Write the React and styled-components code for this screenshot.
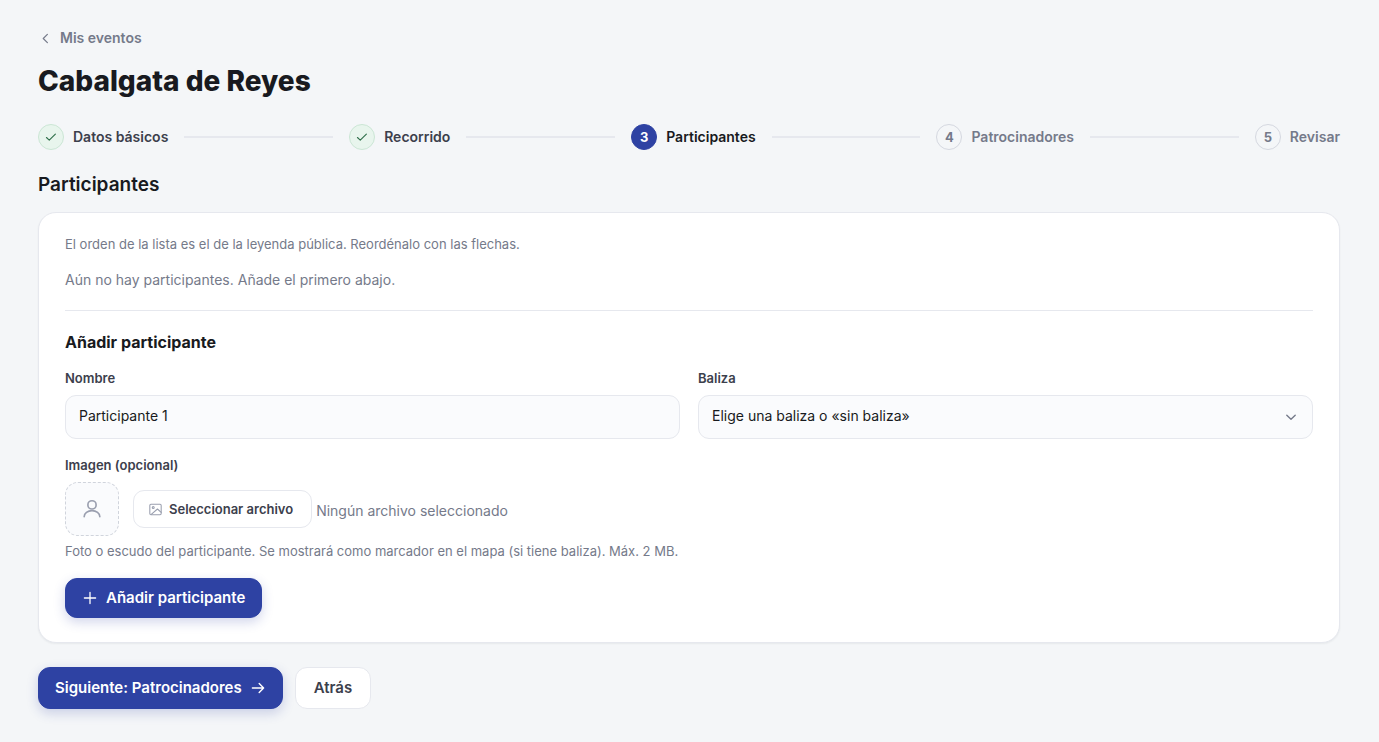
import { useState } from "react";
import styled, { createGlobalStyle } from "styled-components";

const GlobalStyle = createGlobalStyle`
  *, *::before, *::after {
    box-sizing: border-box;
  }
  body {
    margin: 0;
    background: #f4f6f8;
    color: #181a20;
    font-family: Inter, "Open Sans", sans-serif;
    font-size: 14px;
    line-height: 20px;
  }
  h1, h2, h3, p, ol {
    margin: 0;
    padding: 0;
  }
  button, input, select {
    font: inherit;
    color: inherit;
  }
`;

const Page = styled.main`
  display: flex;
  flex-direction: column;
  align-items: stretch;
  padding: 28px 39px 32px 38px;
`;

const BackLink = styled.a`
  display: flex;
  align-items: center;
  align-self: flex-start;
  gap: 7px;
  color: #757a8a;
  font-weight: 600;
  text-decoration: none;
`;

const PageTitle = styled.h1`
  margin-top: 15px;
  font-size: 28px;
  line-height: 36px;
  font-weight: 800;
`;

const Steps = styled.ol`
  display: flex;
  align-items: center;
  gap: 16px;
  margin-top: 25px;
  list-style: none;
`;

const stepColors = {
  done: { text: "#3c404c", bg: "#e8f5ed", border: "#cbe6d5", mark: "#2f6f4a" },
  current: { text: "#181a20", bg: "#2e42a3", border: "#2e42a3", mark: "#fff" },
  pending: { text: "#757a8a", bg: "transparent", border: "#d5d8e0", mark: "#757a8a" },
};

const Step = styled.li`
  display: flex;
  align-items: center;
  gap: 9px;
  flex: ${({ $last }) => ($last ? "none" : "1 0 auto")};
  color: ${({ $state }) => stepColors[$state].text};
  font-weight: 600;

  &::after {
    content: "";
    display: ${({ $last }) => ($last ? "none" : "block")};
    flex: 1;
    height: 2px;
    margin-left: 7px;
    background: #e6e8ee;
  }
`;

const StepMark = styled.span`
  display: grid;
  place-items: center;
  width: 26px;
  height: 26px;
  border: 1px solid ${({ $state }) => stepColors[$state].border};
  border-radius: 50%;
  background: ${({ $state }) => stepColors[$state].bg};
  color: ${({ $state }) => stepColors[$state].mark};
  font-size: 13px;
  font-weight: 700;
`;

const SectionTitle = styled.h2`
  margin-top: 23px;
  font-size: 19px;
  line-height: 24px;
  font-weight: 600;
`;

const Card = styled.section`
  margin-top: 15px;
  padding: 21px 26px 24px;
  border: 1px solid #e6e8ee;
  border-radius: 18px;
  background: #fff;
  box-shadow: 0 1px 2px rgba(24, 26, 32, 0.06);
`;

const Hint = styled.p`
  color: #757a8a;
  font-size: 13px;
`;

const Empty = styled.p`
  margin-top: 15px;
  padding-bottom: 19px;
  border-bottom: 1px solid #e6e8ee;
  color: #757a8a;
  line-height: 22px;
`;

const FormTitle = styled.h3`
  margin-top: 20px;
  font-size: 16px;
  line-height: 22px;
  font-weight: 700;
`;

const Fields = styled.div`
  display: grid;
  grid-template-columns: 1fr 1fr;
  gap: 16px 18px;
  margin-top: 15px;
`;

const Field = styled.div`
  display: flex;
  flex-direction: column;
  gap: 7px;
  grid-column: ${({ $wide }) => ($wide ? "1 / -1" : "auto")};
`;

const Label = styled.label`
  color: #3c404c;
  font-size: 13px;
  font-weight: 600;
`;

const Input = styled.input`
  width: 100%;
  height: 44px;
  padding: 0 13px 3px;
  border: 1px solid #e6e8ee;
  border-radius: 11px;
  background: #fafbfd;
  outline: none;
`;

const SelectWrap = styled.div`
  position: relative;

  svg {
    position: absolute;
    right: 14px;
    top: 14px;
    color: #757a8a;
    pointer-events: none;
  }
`;

const Select = styled(Input).attrs({ as: "select" })`
  appearance: none;
`;

const FileRow = styled.div`
  display: flex;
  align-items: center;
`;

const Avatar = styled.div`
  display: grid;
  place-items: center;
  width: 54px;
  height: 54px;
  margin-right: 14px;
  border: 1px dashed #d0d4dc;
  border-radius: 13px;
  background: #fafbfd;
  color: #9a9faf;
`;

const FileInput = styled.input`
  position: absolute;
  width: 1px;
  height: 1px;
  opacity: 0;
`;

const FileButton = styled.label`
  display: flex;
  align-items: center;
  gap: 7px;
  height: 38px;
  padding: 0 18px 0 15px;
  border: 1px solid #e6e8ee;
  border-radius: 11px;
  background: #fff;
  color: #3c404c;
  font-size: 13px;
  font-weight: 600;
  cursor: pointer;

  svg {
    color: #9a9faf;
  }
`;

const FileName = styled.span`
  margin-left: 4px;
  padding-top: 4px;
  color: #757a8a;
`;

const FileHint = styled(Hint)`
  margin-top: 5px;
`;

const Button = styled.button`
  display: inline-flex;
  align-items: center;
  gap: 8px;
  height: ${({ $small }) => ($small ? "40px" : "42px")};
  padding: 0 ${({ $primary }) => ($primary ? "16px" : "18px")};
  border: 1px solid ${({ $primary }) => ($primary ? "#2e42a3" : "#e6e8ee")};
  border-radius: 12px;
  background: ${({ $primary }) => ($primary ? "#2e42a3" : "#fff")};
  color: ${({ $primary }) => ($primary ? "#fff" : "#3c404c")};
  box-shadow: ${({ $primary }) =>
    $primary ? "0 4px 12px rgba(46, 66, 163, 0.22)" : "none"};
  font-size: 15px;
  font-weight: 600;
  cursor: pointer;
`;

const AddButton = styled(Button)`
  margin-top: 17px;
`;

const Actions = styled.div`
  display: flex;
  gap: 12px;
  margin-top: 24px;
`;

const Icon = ({ size = 16, stroke = 1.5, children }) => (
  <svg
    width={size}
    height={size}
    viewBox="0 0 16 16"
    fill="none"
    stroke="currentColor"
    strokeWidth={stroke}
    strokeLinecap="round"
    strokeLinejoin="round"
    aria-hidden="true"
  >
    {children}
  </svg>
);

const steps = [
  { name: "Datos básicos", state: "done" },
  { name: "Recorrido", state: "done" },
  { name: "Participantes", state: "current" },
  { name: "Patrocinadores", state: "pending" },
  { name: "Revisar", state: "pending" },
];

const App = () => {
  const [name, setName] = useState("Participante 1");
  const [file, setFile] = useState("");

  return (
    <>
      <GlobalStyle />
      <Page>
        <BackLink href="#eventos">
          <Icon size={15} stroke={1.3}>
            <path d="M10 3.6 5.6 8l4.4 4.4" />
          </Icon>
          Mis eventos
        </BackLink>
        <PageTitle>Cabalgata de Reyes</PageTitle>

        <Steps>
          {steps.map((step, i) => (
            <Step
              key={step.name}
              $state={step.state}
              $last={i === steps.length - 1}
              aria-current={step.state === "current" ? "step" : undefined}
            >
              <StepMark $state={step.state}>
                {step.state === "done" ? (
                  <Icon size={14} stroke={1.3}>
                    <path d="m2.8 8.6 3.2 3L13 4.8" />
                  </Icon>
                ) : (
                  i + 1
                )}
              </StepMark>
              {step.name}
            </Step>
          ))}
        </Steps>

        <SectionTitle>Participantes</SectionTitle>
        <Card>
          <Hint>
            El orden de la lista es el de la leyenda pública. Reordénalo con las
            flechas.
          </Hint>
          <Empty>Aún no hay participantes. Añade el primero abajo.</Empty>

          <FormTitle>Añadir participante</FormTitle>
          <Fields>
            <Field>
              <Label htmlFor="nombre">Nombre</Label>
              <Input
                id="nombre"
                type="text"
                value={name}
                onChange={(e) => setName(e.target.value)}
              />
            </Field>
            <Field>
              <Label htmlFor="baliza">Baliza</Label>
              <SelectWrap>
                <Select id="baliza" defaultValue="">
                  <option value="">Elige una baliza o «sin baliza»</option>
                  <option value="none">Sin baliza</option>
                </Select>
                <Icon stroke={1.4}>
                  <path d="M3.8 6.2 8 10.2l4.2-4" />
                </Icon>
              </SelectWrap>
            </Field>
            <Field $wide>
              <Label htmlFor="imagen">Imagen (opcional)</Label>
              <FileRow>
                <Avatar>
                  <Icon size={22} stroke={1.2}>
                    <circle cx="8" cy="5" r="3" />
                    <path d="M2.3 13.6a5.7 4.4 0 0 1 11.4 0" />
                  </Icon>
                </Avatar>
                <FileInput
                  id="imagen"
                  type="file"
                  accept="image/*"
                  onChange={(e) => setFile(e.target.files[0]?.name || "")}
                />
                <FileButton htmlFor="imagen">
                  <Icon size={13} stroke={1.3}>
                    <rect x="1" y="1.6" width="14" height="12.8" rx="1.4" />
                    <circle cx="5.2" cy="5.6" r="1.2" />
                    <path d="m2.8 14 7.6-6.6L15 11.6" />
                  </Icon>
                  Seleccionar archivo
                </FileButton>
                <FileName>{file || "Ningún archivo seleccionado"}</FileName>
              </FileRow>
            </Field>
          </Fields>
          <FileHint>
            Foto o escudo del participante. Se mostrará como marcador en el mapa
            (si tiene baliza). Máx. 2 MB.
          </FileHint>
          <AddButton type="button" $primary $small>
            <Icon stroke={1.3}>
              <path d="M8 2.4v11.2M2.4 8h11.2" />
            </Icon>
            Añadir participante
          </AddButton>
        </Card>

        <Actions>
          <Button type="button" $primary>
            Siguiente: Patrocinadores
            <Icon stroke={1.4}>
              <path d="M2.4 8h11.2M9.2 3.6 13.6 8l-4.4 4.4" />
            </Icon>
          </Button>
          <Button type="button">Atrás</Button>
        </Actions>
      </Page>
    </>
  );
};

export default App;
